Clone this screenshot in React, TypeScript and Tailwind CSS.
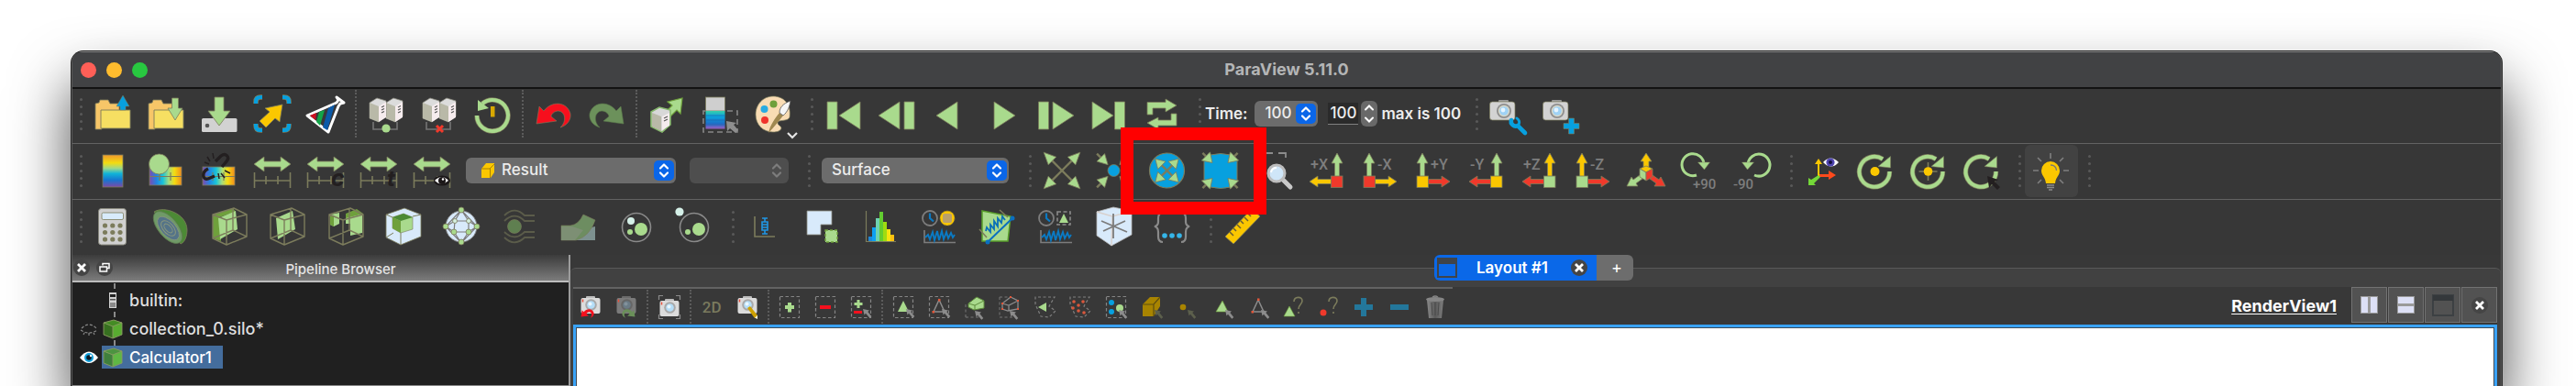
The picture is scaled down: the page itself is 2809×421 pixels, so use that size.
import React from "react";

type Kids = { children?: React.ReactNode };

const G = "#a9da8d";
const O = "#7c7c5c";
const Y = "#fbc700";
const R = "#f0392b";
const B = "#07a0df";
const DG = "#6fa03c";

function Svg({ children }: Kids) {
  return (
    <svg viewBox="0 0 44 44" className="size-11 shrink-0 overflow-visible" fill="none" aria-hidden="true">
      {children}
    </svg>
  );
}

function Small({ children }: Kids) {
  return (
    <svg viewBox="0 0 26 26" className="size-[26px] shrink-0 overflow-visible" fill="none" aria-hidden="true">
      {children}
    </svg>
  );
}

function Tool({ label, children, on }: { label: string; children: React.ReactNode; on?: boolean }) {
  return (
    <button
      type="button"
      aria-label={label}
      title={label}
      className={
        on
          ? "flex h-[57px] w-[58px] shrink-0 items-center justify-center rounded-md bg-[#424242]"
          : "flex h-[57px] w-[58px] shrink-0 items-center justify-center"
      }
    >
      {children}
    </button>
  );
}

function Handle() {
  return (
    <div className="flex w-3 shrink-0 flex-col items-center gap-[5px]">
      {[0, 1, 2, 3, 4].map((i) => (
        <span key={i} className="size-[3px] rounded-full bg-[#595959]" />
      ))}
    </div>
  );
}

function Sep() {
  return (
    <div className="flex w-2 shrink-0 justify-center self-stretch py-px">
      <div className="w-0 border-l-2 border-dotted border-[#5c5c5c]" />
    </div>
  );
}

function Chevrons({ dim }: { dim?: boolean }) {
  return (
    <svg viewBox="0 0 12 18" className="h-[18px] w-3" fill="none" aria-hidden="true">
      <path d="M2 6.5 6 2.5l4 4M2 11.5l4 4 4-4" stroke={dim ? "#7d7d7d" : "#fff"} strokeWidth="2.2" strokeLinecap="round" strokeLinejoin="round" />
    </svg>
  );
}

/* ---------- file and pipeline icons ---------- */

function Folder() {
  return (
    <>
      <path d="M3 39V11l4-1 1-3h9l2 4h10v8H10v20z" fill="#f7c668" stroke={O} strokeWidth=".8" />
      <path d="M9 18h32v20H9z" fill="#f6df62" stroke={O} strokeWidth=".9" />
    </>
  );
}

function Servers() {
  const one = (x: number) => (
    <g key={x} transform={`translate(${x} 0)`}>
      <path d="M4 10l8-5 10 3v17l-8 6-10-4z" fill="#dcdcdc" stroke="#8c8c80" strokeWidth=".8" />
      <path d="M4 10l10 4v17L4 27z" fill="#b9b9a8" />
      <path d="M14 14l8-5v17l-8 5z" fill="#f6ecee" />
      <path d="M17 15l3-1.500M17 18l3-1.500M17 21l3-1.500" stroke="#555" strokeWidth="1.200" />
    </g>
  );
  return (
    <>
      <path d="M8 31v8h26v-8" stroke="#757575" strokeWidth="1.600" />
      {[18, 0].map(one)}
    </>
  );
}

const undoPath = "M4 33 7 14l5 5C20 8 37 8 41 22c1 7-4 13-11 15 7-6 6-17-2-18-5 0-8 4-8 6l6 5z";

function Camera() {
  return (
    <>
      <rect x="11" y="7" width="11" height="4" rx="1" fill="#9a9a9a" />
      <rect x="1.500" y="9" width="27.500" height="20" rx="3" fill="#d3d3d3" stroke={O} strokeWidth=".7" />
      <circle cx="17" cy="19" r="8" fill="#8f8f8f" />
      <circle cx="17" cy="19" r="6.200" fill="#d8d8c8" />
      <circle cx="17" cy="19" r="4.800" fill="#9fd2f5" />
      <circle cx="16" cy="18" r="2.400" fill="#e6f5ff" />
    </>
  );
}

/* ---------- colour map icons ---------- */

function Gradients() {
  return (
    <svg className="absolute size-0" aria-hidden="true">
      <defs>
        <linearGradient id="rv" x1="0" y1="0" x2="0" y2="1">
          <stop offset="0" stopColor="#f0992c" />
          <stop offset=".25" stopColor="#f2dc10" />
          <stop offset=".42" stopColor="#9bd88c" />
          <stop offset=".58" stopColor="#10b4d8" />
          <stop offset=".78" stopColor="#1676d0" />
          <stop offset="1" stopColor="#7d49a6" />
        </linearGradient>
        <linearGradient id="rh" x1="0" y1="0" x2="1" y2="0">
          <stop offset="0" stopColor="#7d4bb0" />
          <stop offset=".22" stopColor="#2384e0" />
          <stop offset=".42" stopColor="#19c4d8" />
          <stop offset=".6" stopColor="#a5dc80" />
          <stop offset=".78" stopColor="#f5dc10" />
          <stop offset="1" stopColor="#f28c1c" />
        </linearGradient>
        <linearGradient id="cool" x1="0" y1="0" x2="0" y2="1">
          <stop offset="0" stopColor="#39cfa8" />
          <stop offset=".3" stopColor="#0aa5dc" />
          <stop offset=".7" stopColor="#1d70c8" />
          <stop offset="1" stopColor="#9a5fc0" />
        </linearGradient>
        <linearGradient id="can" x1="0" y1="0" x2="1" y2="0">
          <stop offset="0" stopColor="#8a8a8a" />
          <stop offset=".5" stopColor="#5a5a5a" />
          <stop offset="1" stopColor="#7d7d7d" />
        </linearGradient>
      </defs>
    </svg>
  );
}

function MapBar() {
  return (
    <>
      <rect x="4" y="18" width="35" height="20" fill="url(#rh)" stroke={O} strokeWidth=".8" />
      <path d="M4 28.500h35M15 24v9M27 24v9" stroke={O} strokeWidth="1.200" />
    </>
  );
}

function Range({ children }: Kids) {
  return (
    <Svg>
      <path d="M2 15 13 7v5h18V7l11 8-11 8v-5H13v5z" fill={G} stroke={O} strokeWidth=".8" />
      <path d="M2.500 24v17M41.500 24v17M2 33h40M15 28v9M28 28v9" stroke={O} strokeWidth="1.600" />
      {children}
    </Svg>
  );
}

/* ---------- camera icons ---------- */

/** Four arrows on the diagonals; all lengths are distances from the centre. */
function Diagonals({ cx, cy, tip, base, half, tail }: { cx: number; cy: number; tip: number; base: number; half: number; tail: number }) {
  return (
    <>
      {[45, 135, 225, 315].map((d) => (
        <g key={d} transform={`translate(${cx} ${cy}) rotate(${d})`}>
          <path d={`M${tail} 0H${base}`} stroke={O} strokeWidth="2.400" />
          <path d={`M${tip} 0 ${base} ${half} ${base} ${-half}z`} fill={G} stroke={O} strokeWidth=".8" />
        </g>
      ))}
    </>
  );
}

function AxisIcon({ flip, up, side, box, label }: { flip?: boolean; up: string; side: string; box: string; label: string }) {
  return (
    <Svg>
      <g transform={flip ? "translate(41 0) scale(-1 1)" : undefined} stroke={O} strokeWidth=".8">
        <path d="M9 3l6 11h-3.500v15h-5V14H3z" fill={up} />
        <path d="M39 34l-9 6v-3.500H15v-5h15V28z" fill={side} />
        <rect x="3" y="28" width="12.500" height="12.500" fill={box} />
      </g>
      <text x={flip ? 3 : 18} y="21" fontSize="16" fontFamily="Roboto, sans-serif" fontWeight="500" fill="#7e7e7e">
        {label}
      </text>
    </Svg>
  );
}

function Ring() {
  return (
    <>
      <path d="M36.500 23A16.500 16.500 0 1 1 29 9.500" stroke={O} strokeWidth="5.400" />
      <path d="M36.500 23A16.500 16.500 0 1 1 29 9.500" stroke={G} strokeWidth="4" />
      <path d="M37.500 6.500V19L24 17.500z" fill={G} stroke={O} strokeWidth=".6" />
    </>
  );
}

/* ---------- filter icons ---------- */

function CubeWire({ color = O }: { color?: string }) {
  return <path d="M4 9 27 2l14 7v24L19 42 4 35zM4 9l15 6 22-6M19 15v27M4 35l22-9 15 7M26 26V2" stroke={color} strokeWidth="1.400" strokeLinejoin="round" />;
}

function TimePlot({ children }: Kids) {
  return (
    <Svg>
      <circle cx="12" cy="13" r="8" stroke="#7d7d7d" strokeWidth="1.800" />
      <path d="M12 7.500V13l4 3.500" stroke="#0a7ac4" strokeWidth="2.200" />
      {children}
      <path d="M6 26v13.500h34" stroke="#7d7d7d" strokeWidth="1.600" />
      <path d="M7 34l3-3 2 5 3-8 2 9 3-10 2 10 3-10 2 9 3-8 2 7 3-6 2 5 2-3" stroke="#0a7ac4" strokeWidth="1.900" />
    </Svg>
  );
}

/* ---------- view toolbar icons ---------- */

function MiniCamera({ dim }: { dim?: boolean }) {
  return (
    <>
      <rect x="8" y="1" width="10" height="4" rx="1" fill={dim ? "#6b6b6b" : "#bdbdbd"} />
      <rect x="2.500" y="3" width="21" height="17" rx="2" fill={dim ? "#7b7b7b" : "#dcdcdc"} />
      <circle cx="13.500" cy="10.500" r="6.300" fill={dim ? "#666" : "#a9a9a9"} />
      <circle cx="13.500" cy="10.500" r="4.300" fill={dim ? "#6a7b86" : "#b5def8"} />
      <circle cx="12.500" cy="9.500" r="2" fill={dim ? "#82919b" : "#eaf7ff"} />
      <path d="M4.500 4.500v3" stroke="#e8503c" strokeWidth="1.500" />
    </>
  );
}

function Dashed() {
  return <rect x="2.500" y="1.500" width="21" height="23" stroke="#858585" strokeWidth="1.200" strokeDasharray="3.500 2.500" />;
}

function Pointer({ x = 0, y = 0, color = "#8c8c8c" }: { x?: number; y?: number; color?: string }) {
  return <path transform={`translate(${x} ${y})`} d="M15 15l7 1.500-1.700 1.500 4 5-2 1.700-4.300-5-1.500 1.800z" fill={color} />;
}

const fade = "#5c5f4c";

const viewTools: { label: string; icon: React.ReactNode }[][] = [
  [
    { label: "Camera undo", icon: <Small><MiniCamera /><g transform="translate(1 11) scale(.38)"><path d={undoPath} fill="#f4101d" /></g></Small> },
    { label: "Camera redo", icon: <Small><MiniCamera dim /><g transform="translate(24 11) scale(-.38 .38)"><path d={undoPath} fill="#6a9059" /></g></Small> },
  ],
  [
    {
      label: "Capture screenshot",
      icon: (
        <Small>
          <path d="M1.500 5V.500H6M20 .500h4.500V5M1.500 21v4.500H6M20 25.500h4.500V21" stroke="#8a8a8a" strokeWidth="1.200" />
          <g transform="translate(0 3)"><MiniCamera /></g>
        </Small>
      ),
    },
  ],
  [
    { label: "Toggle 2D interaction", icon: <span className="font-[Roboto,sans-serif] text-[17px] leading-5 font-medium text-[#7a7a5e]">2D</span> },
    { label: "Adjust camera", icon: <Small><MiniCamera /><path d="M13 14l3-2 8 10-.5 3.500-3-1z" fill="#cda000" /><path d="M21 24.500l3-2.500 0 4z" fill="#f3f3e0" /></Small> },
  ],
  [
    { label: "Add selection", icon: <Small><Dashed /><path d="M11 8h4v3h3v4h-3v3.500h-4V15H8v-4h3z" fill={G} /></Small> },
    { label: "Subtract selection", icon: <Small><Dashed /><path d="M7 11h12v4H7z" fill="#f4101d" /></Small> },
    { label: "Toggle selection", icon: <Small><Dashed /><path d="M8.500 5h3v3h3v3h-3v3h-3v-3h-3V8h3z" fill={G} /><path d="M5 17h9v3H5z" fill="#f4101d" /><Pointer /></Small> },
  ],
  [
    { label: "Select cells on", icon: <Small><Dashed /><path d="M13 6l6 12H7z" fill={G} /><Pointer x={1} /></Small> },
    { label: "Select points on", icon: <Small><Dashed /><path d="M13 5l6 13H7z" stroke="#8c8c8c" strokeWidth="1.500" /><path d="M12 4h2.500v2.500H12zM5.500 17H8v2.500H5.500z" fill="#e2573a" /><Pointer x={1} /></Small> },
    { label: "Select cells through", icon: <Small><path d="M3 10v14M3 24h14" stroke="#777" strokeDasharray="3 2.500" /><path d="M6 9l9-7 8 4v8l-11 2-6-3z" fill={G} stroke="#5e8b3c" /><path d="M6 9l7 2 10-5M13 11v5" stroke="#5e8b3c" /><Pointer x={-2} y={2} /></Small> },
    { label: "Select points through", icon: <Small><path d="M2 2v22M2 24h14M2 2h9" stroke="#777" strokeDasharray="3 2.500" /><path d="M5 9l9-7 8 4v9l-11 2-6-2zM5 9l7 2 10-5M12 11v6" stroke="#8c8c8c" strokeWidth="1.300" /><path d="M13 1h2v2h-2zM4 8h2v2H4zM21 5h2v2h-2zM4 14h2v2H4zM21 14h2v2h-2z" fill="#e2573a" /><Pointer x={-2} y={2} /></Small> },
    { label: "Select cells polygon", icon: <Small><path d="M2 10V2h21l-6 10 7 5-7 7-9-1z" stroke="#808080" strokeWidth="1.200" strokeDasharray="3 2.500" /><path d="M5 13l9-5v10z" fill={G} /></Small> },
    { label: "Select points polygon", icon: <Small><path d="M2 10V2h21l-6 10 7 5-7 7-9-1z" stroke="#808080" strokeWidth="1.200" strokeDasharray="3 2.500" />{[[6, 7], [11, 11], [16, 7], [5, 14], [11, 17], [17, 19]].map(([x, y]) => <circle key={`${x}-${y}`} cx={x} cy={y} r="1.800" fill="#d9573c" />)}</Small> },
    { label: "Select block", icon: <Small><Dashed /><circle cx="8" cy="8" r="3" fill={B} /><circle cx="8" cy="18" r="3" fill={B} /><circle cx="17" cy="14" r="4" fill={G} /><Pointer x={1} y={1} /></Small> },
    { label: "Interactive select cells", icon: <Small><path d="M3 10l8-8h11v10l-7 11H3z" fill="#a88400" /><path d="M3 10h12l7-8M15 10v13" stroke="#5e4e10" strokeWidth="1.200" /><Pointer x={1} y={1} color={fade} /></Small> },
    { label: "Interactive select points", icon: <Small><circle cx="9" cy="13" r="3.300" fill="#a88400" /><Pointer x={-1} y={1} color={fade} /></Small> },
    { label: "Hover cells", icon: <Small><path d="M13 6l6 12H6z" fill={G} stroke={DG} strokeWidth=".6" /><Pointer x={1} y={1} /></Small> },
    { label: "Hover points", icon: <Small><path d="M13 5l6 13H7z" stroke="#8c8c8c" strokeWidth="1.500" /><path d="M12 3.500h2.500V6H12zM5.500 17H8v2.500H5.500z" fill="#e2573a" /><Pointer x={1} y={1} /></Small> },
    { label: "Query cells", icon: <Small><path d="M9 12l6 11H3z" fill={G} stroke={DG} strokeWidth=".6" /><path d="M14 7c0-6 9-6 9-1 0 4-4 4-4 9M19 18v2" stroke={O} strokeWidth="1.600" /></Small> },
    { label: "Query points", icon: <Small><circle cx="7" cy="19" r="3.500" fill={R} /><path d="M13 7c0-6 9-6 9-1 0 4-4 4-4 9M18 18v2" stroke={O} strokeWidth="1.600" /></Small> },
    { label: "Grow selection", icon: <Small><path d="M10 3h6v7h7v6h-7v7h-6v-7H3v-6h7z" fill="#23779b" /></Small> },
    { label: "Shrink selection", icon: <Small><path d="M3 10h20v6H3z" fill="#23779b" /></Small> },
    { label: "Clear selection", icon: <Small><path d="M4 5h18l-2 20H6z" fill="url(#can)" /><path d="M9 8l1 14M13 8v14M17 8l-1 14" stroke="#4b4b4b" /><ellipse cx="13" cy="4.500" rx="10" ry="2.500" fill="#868686" /><path d="M10 2q3-2 6 0" stroke="#868686" strokeWidth="1.500" /></Small> },
  ],
];

const viewGroup = ["w-[77px] grid-cols-2", "w-[39px] grid-cols-1", "w-[77px] grid-cols-2", "w-[116px] grid-cols-3", "w-[618px] grid-cols-16"];

const font = "font-[Inter,'Liberation_Sans',sans-serif]";

function CloseMark() {
  return (
    <svg viewBox="0 0 18 18" className="size-[18px]" fill="none" aria-hidden="true">
      <circle cx="9" cy="9" r="9" fill="#454545" />
      <path d="M5 5l8 8M13 5l-8 8" stroke="#fff" strokeWidth="2.800" />
    </svg>
  );
}

function MainToolbar() {
  return (
    <div className="flex h-[59px] items-center pb-[5px] pl-[3px]">
      <Handle />
      <Tool label="Open"><Svg><Folder /><path d="M33 2l7 12h-4v4h-6v-4h-4z" fill={B} stroke={O} strokeWidth=".5" /></Svg></Tool>
      <Tool label="Load state"><Svg><Folder /><path d="M28.500 5h7v11H40l-8 13-8-13h4.500z" fill={G} stroke={O} strokeWidth=".8" /></Svg></Tool>
      <Tool label="Save data">
        <Svg>
          <rect x="3" y="27" width="38.500" height="15" rx="1.500" fill="#d2d2d2" />
          <circle cx="9" cy="35" r="2.300" fill="#555" />
          <path d="M17 4h10v15h7L22 35 10 19h7z" fill={G} stroke={O} strokeWidth=".8" />
        </Svg>
      </Tool>
      <Tool label="Save extracts">
        <Svg>
          <path d="M4 11V9q0-5 5-5h2M33 4h2q5 0 5 5v2M40 33v2q0 5-5 5h-2M11 40H9q-5 0-5-5v-2" stroke={O} strokeWidth="5.400" />
          <path d="M4 11V9q0-5 5-5h2M33 4h2q5 0 5 5v2M40 33v2q0 5-5 5h-2M11 40H9q-5 0-5-5v-2" stroke={B} strokeWidth="4.200" />
          <path d="M33 12l-3 19-5-4-10 10-7-7 11-10-5-4z" fill={Y} stroke={O} strokeWidth=".8" />
        </Svg>
      </Tool>
      <Tool label="Save Catalyst state">
        <Svg>
          <path d="M2 24l32-14 2-3-2-3 8 6-4 1-2 3-11 28z" fill="#38383a" stroke="#fff" strokeWidth="3" strokeLinejoin="round" />
          <path d="M5 24l7-3-1 8z" fill="#d01020" />
          <path d="M15 20l6-2-5 17-4-4z" fill="#13a548" />
          <path d="M25 16l7-4-8 28-5-3z" fill="#0b5aa8" />
        </Svg>
      </Tool>
      <Sep />
      <Tool label="Connect"><Svg><Servers /><circle cx="22" cy="38" r="4.600" fill={G} /></Svg></Tool>
      <Tool label="Disconnect"><Svg><Servers /><path d="M19 35l7 7M26 35l-7 7" stroke={R} strokeWidth="3" /></Svg></Tool>
      <Tool label="Reset session">
        <Svg>
          <path d="M5 24A17 17 0 1 0 11 11" stroke={O} strokeWidth="5.400" />
          <path d="M5 24A17 17 0 1 0 11 11" stroke={G} strokeWidth="4" />
          <path d="M6 7v12l12-3z" fill={G} />
          <rect x="20" y="14" width="4.500" height="11.500" fill="#d8a800" />
        </Svg>
      </Tool>
      <Sep />
      <Tool label="Undo"><Svg><path d={undoPath} fill="#f70f1d" stroke={O} strokeWidth=".6" /></Svg></Tool>
      <Tool label="Redo"><Svg><g transform="translate(45 0) scale(-1 1)"><path d={undoPath} fill="#6c915b" stroke="#5d7a4c" strokeWidth=".6" /></g></Svg></Tool>
      <Sep />
      <Tool label="Load data server">
        <Svg>
          <path d="M20 21l8-8-5-4 16-4-2 17-4-4-9 9z" fill={G} stroke={DG} strokeWidth="1.200" />
          <path d="M5 20l9-5 12 3v16l-9 8-12-6z" fill="#d8d8d8" stroke="#86b86c" strokeWidth="1.600" />
          <path d="M6 21l10 4v16L6 36z" fill="#b9b9a8" />
          <path d="M17 25l8-4v14l-8 5z" fill="#f4ecee" />
          <path d="M19 27l4-2M19 30l4-2" stroke="#555" strokeWidth="1.200" />
        </Svg>
      </Tool>
      <Tool label="Color palette selection">
        <Svg>
          <rect x="6.500" y="4" width="21" height="15" fill="#cfcfcf" stroke={O} strokeWidth=".8" />
          <rect x="6.500" y="19" width="21" height="19.500" fill="url(#cool)" />
          <path d="M6.500 24h21M6.500 29h21M6.500 34h21" stroke="#1f63b0" strokeWidth=".7" />
          <path d="M6 19H4v23h37V19H28" stroke="#868686" strokeWidth="1.600" strokeDasharray="6 4" />
          <path d="M29 30l11 2-3 2 5 6-3 3-6-5-3 3z" fill="#8e8e8e" />
        </Svg>
      </Tool>
      <Tool label="Load a color palette">
        <Svg>
          <path d="M22 3C11 3 3 12 3 23s8 19 19 19c4 0 8-1 9-4 0-3-4-3-4-6 0-4 11-1 13-6C42 12 34 3 22 3z" fill="#f9dcb4" stroke={O} strokeWidth=".7" />
          <circle cx="22.500" cy="11.500" r="4" fill={DG} />
          <circle cx="12.500" cy="17" r="4" fill="#29abe2" />
          <circle cx="13" cy="29" r="4" fill="#f0332c" />
          <path d="M17 43c2-9 7-16 12-22l4 3C28 30 23 37 17 43z" fill="#a08850" />
          <path d="M29 21c0-6 4-10 12-13-1 6-3 12-8 16z" fill="#f6f6f6" stroke="#555" strokeWidth=".8" />
          <path d="M38 43l5 5 5-5" stroke="#e5e5e5" strokeWidth="2.200" />
        </Svg>
      </Tool>
      <div className="ml-[7px]"><Handle /></div>
      <Tool label="First frame"><Svg><path d="M4 9h11v30H4zM40 9v30L17 24z" fill={G} stroke={O} strokeWidth=".8" /></Svg></Tool>
      <Tool label="Previous frame"><Svg><path d="M25 9v30L2 24zM30 9h11v30H30z" fill={G} stroke={O} strokeWidth=".8" /></Svg></Tool>
      <Tool label="Reverse"><Svg><path d="M30 9v30L7 24z" fill={G} stroke={O} strokeWidth=".8" /></Svg></Tool>
      <Tool label="Play"><Svg><path d="M12 9v30l23-15z" fill={G} stroke={O} strokeWidth=".8" /></Svg></Tool>
      <Tool label="Next frame"><Svg><path d="M2.500 9h11v30h-11zM18 9v30l23-15z" fill={G} stroke={O} strokeWidth=".8" /></Svg></Tool>
      <Tool label="Last frame"><Svg><path d="M3 9v30l23-15zM27.500 9h11v30h-11z" fill={G} stroke={O} strokeWidth=".8" /></Svg></Tool>
      <Tool label="Loop">
        <Svg>
          <path d="M5 23V9.500h20V6l12 7-12 7v-4H11v7zM37 22v13H17v4L5 32l12-6v3h14v-7z" fill={G} stroke={O} strokeWidth=".8" />
        </Svg>
      </Tool>
      <div className="ml-[5px]"><Handle /></div>
      <label htmlFor="time" className="text-[17px] leading-6 font-semibold">Time:</label>
      <div className="relative ml-2 w-[69px]">
        <select id="time" className="h-7 w-full appearance-none rounded-md bg-[#6c6c6c] pl-[11px] text-[17px] font-medium" defaultValue="100">
          <option>100</option>
        </select>
        <span className="pointer-events-none absolute top-[3px] right-[2px] flex size-[22px] items-center justify-center rounded-[5px] bg-[#0a66e8]"><Chevrons /></span>
      </div>
      <input aria-label="Time step" defaultValue="100" className="ml-[11px] h-6 w-[33px] border-b border-[#808080] bg-[#2a2a2a] text-center text-[17px] font-medium" />
      <button type="button" aria-label="Step" className="ml-[3px] flex h-7 w-[18px] items-center justify-center rounded-md bg-[#696969]">
        <svg viewBox="0 0 12 24" className="h-6 w-3" fill="none" aria-hidden="true"><path d="M2 7.500l4-4 4 4M2 16.500l4 4 4-4" stroke="#fff" strokeWidth="2" strokeLinecap="round" /></svg>
      </button>
      <span className="ml-1 w-[92px] text-[17px] leading-6 font-semibold whitespace-nowrap">max is 100</span>
      <div className="ml-[6px]"><Handle /></div>
      <Tool label="Adjust camera"><Svg><Camera /><path d="M25 29a5 5 0 0 0 7 6l8 8" stroke={B} strokeWidth="4.600" strokeLinecap="round" /><path d="M31 27a5 5 0 0 1 2 7" stroke={B} strokeWidth="3" strokeLinecap="round" /></Svg></Tool>
      <Tool label="Add camera"><Svg><Camera /><path d="M29.500 27h6v5.500H41v6h-5.500V44h-6v-5.500H24v-6h5.500z" fill={B} stroke={O} strokeWidth=".6" /></Svg></Tool>
    </div>
  );
}

function ColorToolbar() {
  return (
    <div className="flex h-[61px] items-center border-t border-[#626262] pb-[2px] pl-[3px]">
      <Handle />
      <Tool label="Edit color map"><Svg><rect x="11" y="5" width="22" height="35" fill="url(#rv)" stroke={O} strokeWidth=".8" /></Svg></Tool>
      <Tool label="Use separate color map"><Svg><MapBar /><circle cx="14.500" cy="15" r="11" fill={G} stroke={O} strokeWidth=".8" /></Svg></Tool>
      <Tool label="Unlink color map">
        <Svg>
          <MapBar />
          <path d="M10 20c-8 4-6 13 0 11l7-3M18 12l6-6c5-4 10 1 6 6l-5 6" stroke="#231f20" strokeWidth="3.400" />
          <path d="M9 7l3 5M15 3l1 6M6 13l5 2M24 25l4 5M28 22l6 3M21 25l1 6" stroke="#231f20" strokeWidth="1.500" />
        </Svg>
      </Tool>
      <Tool label="Rescale to data range"><Range /></Tool>
      <Tool label="Rescale to custom range"><Range><text x="28" y="39" fontSize="25" fontWeight="700" fontStyle="italic" fontFamily="Inter, sans-serif" fill="#231f20">c</text></Range></Tool>
      <Tool label="Rescale over all timesteps"><Range><text x="31" y="39" fontSize="24" fontWeight="700" fontStyle="italic" fontFamily="Inter, sans-serif" fill="#231f20">t</text></Range></Tool>
      <Tool label="Rescale to visible range">
        <Range>
          <ellipse cx="33" cy="33" rx="9" ry="5.500" fill="#1b1718" />
          <path d="M25 33q8-8 15 0-8 7-15 0z" fill="#fff" />
          <circle cx="33" cy="33" r="4" fill="#1b1718" />
          <circle cx="34" cy="31.500" r="1.200" fill="#fff" />
        </Range>
      </Tool>
      <div className="relative ml-2 w-[229px]">
        <select aria-label="Color by" className="h-7 w-full appearance-none rounded-md bg-[#6c6c6c] pl-[39px] text-[17px] font-medium text-[#ececec]" defaultValue="Result">
          <option>Result</option>
        </select>
        <svg viewBox="0 0 16 18" className="pointer-events-none absolute top-[5px] left-4 h-[18px] w-4" aria-hidden="true">
          <path d="M1 7l5-6h9v10l-4 6H1z" fill="#fbc700" />
          <path d="M1 7h9l5-5M10.500 7v10" stroke="#a88200" fill="none" />
        </svg>
        <span className="pointer-events-none absolute top-[3px] right-[2px] flex size-[22px] items-center justify-center rounded-[5px] bg-[#0a66e8]"><Chevrons /></span>
      </div>
      <div className="relative ml-[15px] w-[108px]">
        <select aria-label="Component" disabled className="h-7 w-full appearance-none rounded-md bg-[#4e4e4e]" />
        <span className="pointer-events-none absolute top-[3px] right-[2px] flex size-[22px] items-center justify-center"><Chevrons dim /></span>
      </div>
      <div className="ml-4"><Handle /></div>
      <div className="relative ml-2 w-[204px]">
        <select aria-label="Representation" className="h-7 w-full appearance-none rounded-md bg-[#6c6c6c] pl-[11px] text-[17px] font-medium text-[#ececec]" defaultValue="Surface">
          <option>Surface</option>
        </select>
        <span className="pointer-events-none absolute top-[3px] right-[2px] flex size-[22px] items-center justify-center rounded-[5px] bg-[#0a66e8]"><Chevrons /></span>
      </div>
      <div className="ml-[17px]"><Handle /></div>
      <Tool label="Reset camera"><Svg><Diagonals cx={22} cy={22} tip={28} base={15} half={6} tail={0} /></Svg></Tool>
      <Tool label="Zoom to data">
        <Svg>
          <circle cx="20.500" cy="22" r="6.500" fill={B} stroke={O} strokeWidth=".8" />
          <Diagonals cx={20.5} cy={22} tip={9} base={20} half={6} tail={26} />
        </Svg>
      </Tool>
      <div className="relative flex">
        <Tool label="Reset camera closest">
          <Svg>
            <circle cx="20.500" cy="22" r="19" fill={B} stroke={O} strokeWidth="1.200" />
            <Diagonals cx={20.5} cy={22} tip={18} base={8} half={6} tail={0} />
          </Svg>
        </Tool>
        <Tool label="Zoom closest to data">
          <Svg>
            <path d="M10 5q11-3 22 0l7 5v24l-7 6q-11 3-22 0l-7-6V10z" fill={B} stroke={O} />
            <Diagonals cx={20.5} cy={22} tip={12} base={22} half={6.5} tail={27} />
          </Svg>
        </Tool>
        <div className="pointer-events-none absolute -top-[19px] -right-[20px] -bottom-[19px] -left-[23px] z-10 border-[14px] border-[#ff0000]" />
      </div>
      <Tool label="Zoom to box">
        <Svg>
          <path d="M2 3h5M12 3h8M26 3h8v5" stroke="#8c8c8c" strokeWidth="1.800" />
          <path d="M30 31l9 9" stroke="#c9c9c9" strokeWidth="5" strokeLinecap="round" />
          <circle cx="24" cy="25" r="9" fill="#cfe6f8" stroke="#bdbdbd" strokeWidth="3" />
          <path d="M18 24q1-5 6-5" stroke="#fff" strokeWidth="2" />
        </Svg>
      </Tool>
      <Tool label="View +X"><AxisIcon flip up={G} side={Y} box={R} label="+X" /></Tool>
      <Tool label="View -X"><AxisIcon up={G} side={Y} box={R} label="-X" /></Tool>
      <Tool label="View +Y"><AxisIcon up={G} side={R} box={Y} label="+Y" /></Tool>
      <Tool label="View -Y"><AxisIcon flip up={G} side={R} box={Y} label="-Y" /></Tool>
      <Tool label="View +Z"><AxisIcon flip up={Y} side={R} box={G} label="+Z" /></Tool>
      <Tool label="View -Z"><AxisIcon up={Y} side={R} box={G} label="-Z" /></Tool>
      <Tool label="Isometric view">
        <Svg>
          <g stroke={O} strokeWidth=".8">
            <path d="M21 3l6 9h-3v7h-6v-7h-3z" fill={Y} />
            <path d="M0 39l5-10 2 3 7-5 3 4-7 5 2 3z" fill={G} />
            <path d="M42 39l-5-10-2 3-7-5-3 4 7 5-2 3z" fill={R} />
            <path d="M14 20l7-3 7 3-7 4z" fill={Y} />
            <path d="M14 20l7 4v9l-7-4z" fill={G} />
            <path d="M28 20l-7 4v9l7-4z" fill={R} />
          </g>
        </Svg>
      </Tool>
      <Tool label="Rotate +90">
        <Svg>
          <path d="M18 27A12 12 0 1 1 26 15" stroke={G} strokeWidth="3" />
          <path d="M19.500 13h13l-6 8z" fill={G} stroke={O} strokeWidth=".5" />
          <text x="14" y="42" fontSize="15" fontFamily="Roboto, sans-serif" fontWeight="500" fill="#7e7e7e">+90</text>
        </Svg>
      </Tool>
      <Tool label="Rotate -90">
        <Svg>
          <path d="M23 27A12 12 0 1 0 16 15" stroke={G} strokeWidth="3" />
          <path d="M22.500 13h-13l6 8z" fill={G} stroke={O} strokeWidth=".5" />
          <text x="0" y="42" fontSize="15" fontFamily="Roboto, sans-serif" fontWeight="500" fill="#7e7e7e">-90</text>
        </Svg>
      </Tool>
      <div className="ml-[6px]"><Handle /></div>
      <Tool label="Show orientation axes">
        <Svg>
          <path d="M16 28V15h-3l4-6 4 6h-3v13z" fill={Y} />
          <path d="M18 26h10v-4l8 5-8 5v-3H18z" fill="#ff4a1c" />
          <path d="M17 27l2 2-7 7 2 2H6v-8l3 2z" fill="#74d838" />
          <path d="M22 13q8-9 17 0-8 9-17 0z" fill="#fff" />
          <circle cx="30" cy="13" r="4.600" fill="#4f45b0" /><circle cx="30" cy="13" r="2" fill="#15123f" />
        </Svg>
      </Tool>
      <Tool label="Show center"><Svg><Ring /><circle cx="20.500" cy="23" r="5" fill={Y} /></Svg></Tool>
      <Tool label="Reset center"><Svg><Ring /><path d="M20.500 13v20M10.500 23h20" stroke={O} strokeWidth="1.600" /><circle cx="20.500" cy="23" r="4.800" fill={Y} /></Svg></Tool>
      <Tool label="Pick center"><Svg><Ring /><path d="M27 28l12 4-4 2 6 6-3 3-6-6-3 4z" fill="#231f20" /></Svg></Tool>
      <div className="ml-[5px]"><Handle /></div>
      <Tool label="Light inspector" on>
        <Svg>
          <path d="M21 3v6M2 22h6M35 22h6M7 8l4 4M35 8l-4 4M7 36l4-4M35 36l-4-4" stroke="#808080" strokeWidth="1.600" />
          <path d="M21 12a10 10 0 0 1 10 10c0 6-4 6-5 14H16c-1-8-5-8-5-14a10 10 0 0 1 10-10z" fill={Y} />
          <path d="M21 16q6 0 6.500 6" stroke="#777" strokeWidth="1.300" />
          <path d="M17 38h8M17 40.500h8M19 43h4" stroke="#8a8a8a" strokeWidth="1.600" />
        </Svg>
      </Tool>
      <div className="ml-[6px]"><Handle /></div>
    </div>
  );
}

function FilterToolbar() {
  return (
    <div className="flex h-[61px] items-center border-t border-[#626262] pb-[2px] pl-[3px]">
      <Handle />
      <div className="flex w-[692px] shrink-0 justify-between">
        <Tool label="Calculator">
          <Svg>
            <rect x="6.500" y="2.500" width="30" height="39.500" rx="3" fill="#d0d0d0" stroke="#8b8b80" />
            <rect x="10" y="7" width="23.500" height="7.500" rx="1.500" fill="#d8ebfb" stroke={O} strokeWidth=".8" />
            {[21, 28.5, 36].map((y) => [13.5, 21.8, 30].map((x) => <circle key={`${x}-${y}`} cx={x} cy={y} r="2.600" fill={O} />))}
          </Svg>
        </Tool>
        <Tool label="Contour">
          <Svg>
            <path d="M4 6C15-1 40 8 40 26c0 6-2 13-7 15z" fill="#4c8a35" stroke={O} strokeWidth=".8" />
            <ellipse cx="19" cy="23" rx="21" ry="10.500" transform="rotate(50 19 23)" fill="#6f9a67" stroke="#5f7a50" strokeWidth=".8" />
            <ellipse cx="19.500" cy="24" rx="15.500" ry="8" transform="rotate(48 19.500 24)" fill="#547388" stroke="#8a977c" strokeWidth=".8" />
            <ellipse cx="19.500" cy="24" rx="10" ry="5.500" transform="rotate(48 19.500 24)" stroke="#8a977c" />
            <ellipse cx="19.500" cy="24" rx="6" ry="3" transform="rotate(48 19.500 24)" stroke="#8a977c" />
          </Svg>
        </Tool>
        <Tool label="Clip">
          <Svg>
            <path d="M4 9l22-7 3 4-18 6 2 26-9-3z" fill={DG} />
            <path d="M10 13l19-8 2 20-19 11z" fill={G} />
            <CubeWire />
          </Svg>
        </Tool>
        <Tool label="Slice"><Svg><path d="M10 13l18-8 3 20-19 11z" fill={G} /><CubeWire /></Svg></Tool>
        <Tool label="Threshold">
          <Svg>
            <path d="M5 9l10-2v12l-6 3-4-2z" fill={G} /><path d="M5 9l4 2v11l-4-2z" fill={DG} />
            <path d="M22 12l18-4v21l-13 3V19h-5z" fill={G} /><path d="M22 8l12-5 7 5-19 5z" fill={DG} />
            <CubeWire />
          </Svg>
        </Tool>
        <Tool label="Extract subset">
          <Svg>
            <path d="M3 9l20-7 18 7v24L19 42 3 34z" fill="#d8eafb" stroke={O} strokeWidth=".8" />
            <path d="M19 26v16M3 9l7 3M41 9l-9 2M3 34l8-5" stroke={O} />
            <path d="M10 12l12-4 10 4v13l-13 4-9-5z" fill={G} stroke={O} strokeWidth=".6" />
            <path d="M10 12l9 4v13l-9-5z" fill={DG} /><path d="M10 12l12-4 10 4-13 4z" fill="#4c8a35" />
          </Svg>
        </Tool>
        <Tool label="Glyph">
          <Svg>
            <circle cx="22" cy="22" r="17" fill="#d8eafb" stroke="#7c7c7c" />
            <path d="M22 4L5 22l17 18 17-18zM15 16h15L22 4zM14 28h16l-8 12zM15 16l-1 12M30 16v12M5 22l10-6M5 22l9 6M39 22l-9-6M39 22l-9 6" stroke="#7c7c7c" strokeWidth="1.200" />
            {[[22, 4], [5, 22], [39, 22], [22, 39], [14, 28], [30, 28]].map(([x, y]) => <circle key={`${x}-${y}`} cx={x} cy={y} r="3" fill={G} stroke={O} strokeWidth=".8" />)}
            {[[15, 16], [30, 16]].map(([x, y]) => <circle key={x} cx={x} cy={y} r="2.500" fill="#d5f0e0" stroke={O} strokeWidth=".8" />)}
          </Svg>
        </Tool>
        <Tool label="Stream tracer">
          <Svg>
            <circle cx="16" cy="22" r="7.500" fill="#5f7f50" stroke={O} strokeWidth=".6" />
            <path d="M5 10c8-8 16-6 22 0h11M5 16c8-8 16-6 22 0h11M5 28c8 8 16 6 22 0h11M5 34c8 8 16 6 22 0h11" stroke="#5b5c4a" strokeWidth="1.800" />
          </Svg>
        </Tool>
        <Tool label="Warp by vector">
          <Svg>
            <path d="M4 37h37V22l-13 3z" fill="#7d9190" />
            <path d="M4 21h10q9-1 14-12l13 6q-6 18-21 22H4z" fill="#6d8d61" stroke={O} strokeWidth=".6" />
            <path d="M4 22h12l12 4-9 11H4z" fill="#7d8f74" />
          </Svg>
        </Tool>
        <Tool label="Group datasets">
          <Svg>
            <circle cx="22" cy="23" r="15.500" stroke="#8a8a8a" strokeWidth="1.600" />
            <circle cx="16" cy="16" r="4" fill="#d5f0e8" /><circle cx="15" cy="28" r="3" fill={G} /><circle cx="27" cy="25" r="7" fill={G} />
          </Svg>
        </Tool>
        <Tool label="Extract level">
          <Svg>
            <circle cx="22" cy="23" r="15.500" stroke="#8a8a8a" strokeWidth="1.600" />
            <circle cx="6" cy="6" r="4.600" fill="#d5f0e8" /><circle cx="15" cy="28" r="3" fill={G} /><circle cx="27" cy="25" r="7" fill={G} />
          </Svg>
        </Tool>
      </div>
      <div className="ml-[7px]"><Handle /></div>
      <div className="flex w-[502px] shrink-0 justify-between">
        <Tool label="Compute quartiles">
          <Svg>
            <path d="M11 11v22h22" stroke={O} strokeWidth="1.600" />
            <path d="M19 13h6M22 13v4M19 30h6M22 30v-4M19 17h6v9h-6zM19 20h6M19 23h6" stroke="#2196e3" strokeWidth="1.600" />
          </Svg>
        </Tool>
        <Tool label="Extract selection">
          <Svg>
            <path d="M5 5h27v15H20v11H5z" fill="#d8eafb" stroke="#8b8b80" strokeWidth=".8" />
            <rect x="25" y="26" width="13" height="13" fill={G} stroke={DG} strokeDasharray="3 2" strokeWidth="1.400" />
          </Svg>
        </Tool>
        <Tool label="Histogram">
          <Svg>
            <path d="M8 33h4v5H8z" fill="#1e88d8" /><path d="M12 23h4v15h-4z" fill="#0ea0f2" /><path d="M16 13h4v25h-4z" fill="#6fd3b0" /><path d="M20 6h4v32h-4z" fill="#62cc30" />
            <path d="M24 17h4v21h-4z" fill="#9fdc10" /><path d="M28 25h4v13h-4z" fill="#f4e410" /><path d="M32 31h4v7h-4z" fill="#fbc010" />
            <path d="M5.500 5v33.500H38" stroke={O} strokeWidth="1.200" />
          </Svg>
        </Tool>
        <Tool label="Plot data over time"><TimePlot><circle cx="31" cy="13" r="8" fill={Y} stroke="#8a7a30" strokeWidth=".8" strokeDasharray="3 1.500" /><rect x="26" y="8" width="10" height="10" rx="2" fill="#b9a06c" /></TimePlot></Tool>
        <Tool label="Plot over line">
          <Svg>
            <path d="M5 5l31 6-3 27-28 0z" fill={G} stroke="#5aa02c" strokeWidth="1.500" />
            <path d="M9 27l1-4 4 5 0-8 4 5 0-9 4 6 0-9 4 5 1-7 3 4" stroke="#0a70b8" strokeWidth="1.800" />
            <path d="M11 39L38 13" stroke="#0a6fc0" strokeWidth="2" /><circle cx="11" cy="39" r="2.500" fill="#0a6fc0" /><circle cx="38" cy="13" r="2.500" fill="#0a6fc0" />
            <path d="M2 25l8 9M24 4l9 8" stroke={O} strokeWidth="1.500" />
          </Svg>
        </Tool>
        <Tool label="Plot selection over time"><TimePlot><rect x="24" y="6" width="14" height="14" stroke="#8a8a8a" strokeWidth="1.600" strokeDasharray="4 2.500" /><path d="M31 8l5 10H26z" fill={G} /></TimePlot></Tool>
        <Tool label="Probe location">
          <Svg>
            <path d="M3 6l18-5 20 4v26L19 43 3 32z" fill="#d8eafb" stroke="#b8b8b8" strokeWidth=".8" />
            <path d="M3 6l17 5 21-6M20 11l-1 32" stroke="#d8d0cc" strokeWidth="1.400" />
            <path d="M21 8v27M8 16l28 12M10 27l24-11" stroke="#7c7c7c" strokeWidth="1.800" />
          </Svg>
        </Tool>
        <Tool label="Programmable filter">
          <Svg>
            <path d="M11 7q-4 1-4 6v4q0 4-4 5 4 1 4 6v5q0 6 5 6M33 7q4 1 4 6v4q0 4 4 5-4 1-4 6v5q0 6-5 6" stroke="#8a8a8a" strokeWidth="2.200" />
            {[14, 22, 30].map((x) => <circle key={x} cx={x} cy="32" r="2.800" fill="#35b5e8" />)}
          </Svg>
        </Tool>
      </div>
      <div className="ml-[7px]"><Handle /></div>
      <Tool label="Ruler">
        <Svg>
          <path d="M3 33L32 3l9 8-29 30z" fill={Y} stroke={O} strokeWidth=".8" />
          <path d="M8 28l4 4M12 24l3 3M16 20l4 4M20 16l3 3M24 12l4 4M28 8l3 3" stroke="#6d6030" strokeWidth="1.500" />
        </Svg>
      </Tool>
    </div>
  );
}

function CubeMark({ selected }: { selected?: boolean }) {
  return (
    <svg viewBox="0 0 24 22" className="h-[22px] w-6 shrink-0" fill="none" aria-hidden="true">
      <path d="M2 4l11-3 9 3v13l-10 4-10-4z" fill={selected ? "#5fb844" : "#58ac30"} />
      <path d="M2 4l10 4v13L2 17z" fill={selected ? "#3f7f3c" : "#376f20"} />
      <path d="M2 4l11-3 9 3-10 4z" fill={selected ? "#4c9440" : "#448c24"} />
      <path d="M2 4l11-3 9 3v13l-10 4-10-4zM2 4l10 4 10-4M12 8v13" stroke="#8a9a62" strokeWidth=".9" />
    </svg>
  );
}

function Link() {
  return <div className="ml-[45px] h-[6px] w-[2px] bg-[#8a8a8a]" />;
}

function PipelineBrowser() {
  return (
    <section className="flex w-[543px] shrink-0 flex-col border-r-2 border-[#9c9c9c]">
      <header className="flex h-[30px] items-center border-b-2 border-[#bdbdbd] bg-linear-to-b from-[#3c3c3c] to-[#7c7c7c] pl-px">
        <button type="button" aria-label="Close panel" className="flex w-[18px] justify-center"><CloseMark /></button>
        <button type="button" aria-label="Float panel" className="ml-[7px] flex w-[18px] justify-center">
          <svg viewBox="0 0 18 18" className="size-[18px]" fill="none" aria-hidden="true">
            <circle cx="9" cy="9" r="9" fill="#454545" />
            <path d="M7 6.500V4.500h7v5h-2M4 8h7.500v5H4z" stroke="#fff" strokeWidth="1.500" />
          </svg>
        </button>
        <h2 className="flex-1 pt-[3px] text-center text-[15px] leading-5 font-medium text-[#e4e4e4]">Pipeline Browser</h2>
      </header>
      <div className="flex flex-1 flex-col border-b border-[#8a8a8a] bg-[#202020] pt-px text-[18px] leading-6 font-medium text-[#dedede]">
        <Link />
        <div className="flex h-[25px] items-center pl-[32px]">
          <svg viewBox="0 0 24 22" className="h-[22px] w-6" fill="none" aria-hidden="true">
            <path d="M8 2h8v17H8z" fill="#d2d2d2" /><path d="M9 4h6v3H9z" fill="#222" /><path d="M9 9h6v1.500H9z" fill="#555" /><path d="M9 13h6v5H9z" fill="#8a8a8a" />
          </svg>
          <span className="ml-[6px]">builtin:</span>
        </div>
        <Link />
        <div className="flex h-[25px] items-center pl-2">
          <svg viewBox="0 0 20 14" className="mr-1 h-[14px] w-5" fill="none" aria-label="Hidden">
            <path d="M2 6q8-8 16 0M1 8q9 6 18 0M5 11l-1 2M10 11v3M15 11l1 2" stroke="#8a8a8a" strokeWidth="1.200" strokeDasharray="3 2" />
          </svg>
          <CubeMark />
          <span className="ml-[6px]">collection_0.silo*</span>
        </div>
        <Link />
        <div className="flex h-[25px] items-center pl-2">
          <svg viewBox="0 0 20 14" className="mr-1 h-[14px] w-5" fill="none" aria-label="Visible">
            <path d="M0 7q10-13 20 0-10 12-20 0z" fill="#fff" /><circle cx="10" cy="7" r="5" fill="#12a0dc" /><circle cx="10" cy="7" r="2.800" fill="#0a1c28" /><circle cx="12" cy="5" r="1.200" fill="#fff" />
          </svg>
          <div className="flex h-[25px] w-[132px] items-center bg-[#446d9d] text-[17px] text-white">
            <CubeMark selected />
            <span className="ml-[6px]">Calculator1</span>
          </div>
        </div>
      </div>
    </section>
  );
}

const frameButton = "flex size-[39px] items-center justify-center border border-[#727272] bg-[#525252]";

function LayoutArea() {
  return (
    <section className="flex min-w-0 flex-1 flex-col bg-[#414141]">
      <div className="relative flex h-[35px] justify-center bg-[#383838] pr-1">
        <div className="absolute inset-x-0 top-[14px] bottom-0 rounded-t-md border-t border-[#595959] bg-[#414141]" />
        <div className="relative flex h-[28px] items-center">
          <button type="button" className="flex h-[28px] w-[177px] items-center rounded-l-md bg-[#0a68e8] pl-[3px]">
            <svg viewBox="0 0 22 22" className="size-[22px]" fill="none" aria-hidden="true">
              <path d="M1 1h20v20H1z" stroke="#3f444a" strokeWidth="2" /><path d="M1 1h20v6H1z" fill="#3f444a" />
            </svg>
            <span className="ml-[21px] text-[17px] leading-6 font-semibold text-white">Layout #1</span>
            <span className="mr-[10px] ml-auto"><CloseMark /></span>
          </button>
          <button type="button" aria-label="New layout" className="flex h-[28px] w-10 items-center justify-center rounded-r-md bg-[#6d6d6d] pl-1 text-[18px] leading-6 text-white">+</button>
        </div>
      </div>
      <div className="mr-1 ml-[3px] flex h-[41px] justify-between bg-[#383838]">
        <div className="flex items-center border-t-2 border-[#626262]">
          {viewTools.map((group, i) => (
            <React.Fragment key={i}>
              {i > 0 && <Sep />}
              <div className={`grid ${viewGroup[i]}`}>
                {group.map((t) => (
                  <button key={t.label} type="button" aria-label={t.label} title={t.label} className="flex h-9 items-center justify-center">
                    {t.icon}
                  </button>
                ))}
              </div>
            </React.Fragment>
          ))}
        </div>
        <div className="flex gap-px">
          <a href="#view" className="mr-[15px] self-center text-[18px] leading-6 font-bold text-white underline underline-offset-2">RenderView1</a>
          <button type="button" aria-label="Split horizontally" className={frameButton}>
            <svg viewBox="0 0 19 19" className="size-[19px]" aria-hidden="true"><path d="M0 0h19v19H0z" fill="#9a9a9a" /><path d="M1 1h7v17H1zM11 1h7v17h-7z" fill="#dde0f6" /></svg>
          </button>
          <button type="button" aria-label="Split vertically" className={frameButton}>
            <svg viewBox="0 0 19 19" className="size-[19px]" aria-hidden="true"><path d="M0 0h19v19H0z" fill="#9a9a9a" /><path d="M1 1h17v7H1zM1 11h17v7H1z" fill="#dde0f6" /></svg>
          </button>
          <button type="button" aria-label="Maximize" className={frameButton}>
            <svg viewBox="0 0 24 24" className="size-6" fill="none" aria-hidden="true"><path d="M1 1h22v22H1z" stroke="#3c4043" strokeWidth="2" /><path d="M1 1h22v6H1z" fill="#34383b" /></svg>
          </button>
          <button type="button" aria-label="Close view" className={frameButton}><CloseMark /></button>
        </div>
      </div>
      <div id="view" className="mr-1 ml-[3px] flex flex-1 border-x-[3px] border-t-[3px] border-[#3aa3f7]">
        <div className="flex-1 border-x border-t border-[#3f4a55] bg-white" />
      </div>
    </section>
  );
}

export default function App() {
  return (
    <div className={`flex min-h-screen overflow-hidden bg-white pt-[55px] pr-[80px] pl-[77px] text-[#ededed] ${font}`}>
      <Gradients />
      <main className="flex min-w-0 flex-1 rounded-t-[14px] border border-b-0 border-[#222] bg-[#373737] shadow-[0_36px_64px_rgba(0,0,0,0.7)]">
        <div className="flex min-w-0 flex-1 flex-col overflow-hidden rounded-t-[13px] border-x border-[#5c5c5c]">
          <div className="relative flex h-[41px] items-center border-t border-b-2 border-t-[#8c8c8c] border-b-[#121212] bg-[#414244] pl-[9px]">
            <div className="flex gap-[11px]">
              <button type="button" aria-label="Close" className="size-[17px] rounded-full bg-[#ff5f57]" />
              <button type="button" aria-label="Minimize" className="size-[17px] rounded-full bg-[#febc2e]" />
              <button type="button" aria-label="Zoom" className="size-[17px] rounded-full bg-[#28c840]" />
            </div>
            <h1 className="pointer-events-none absolute inset-x-0 text-center text-[18px] leading-6 font-bold text-[#b4b5b6]">ParaView 5.11.0</h1>
          </div>
          <MainToolbar />
          <ColorToolbar />
          <FilterToolbar />
          <div className="flex flex-1">
            <PipelineBrowser />
            <LayoutArea />
          </div>
        </div>
      </main>
    </div>
  );
}
